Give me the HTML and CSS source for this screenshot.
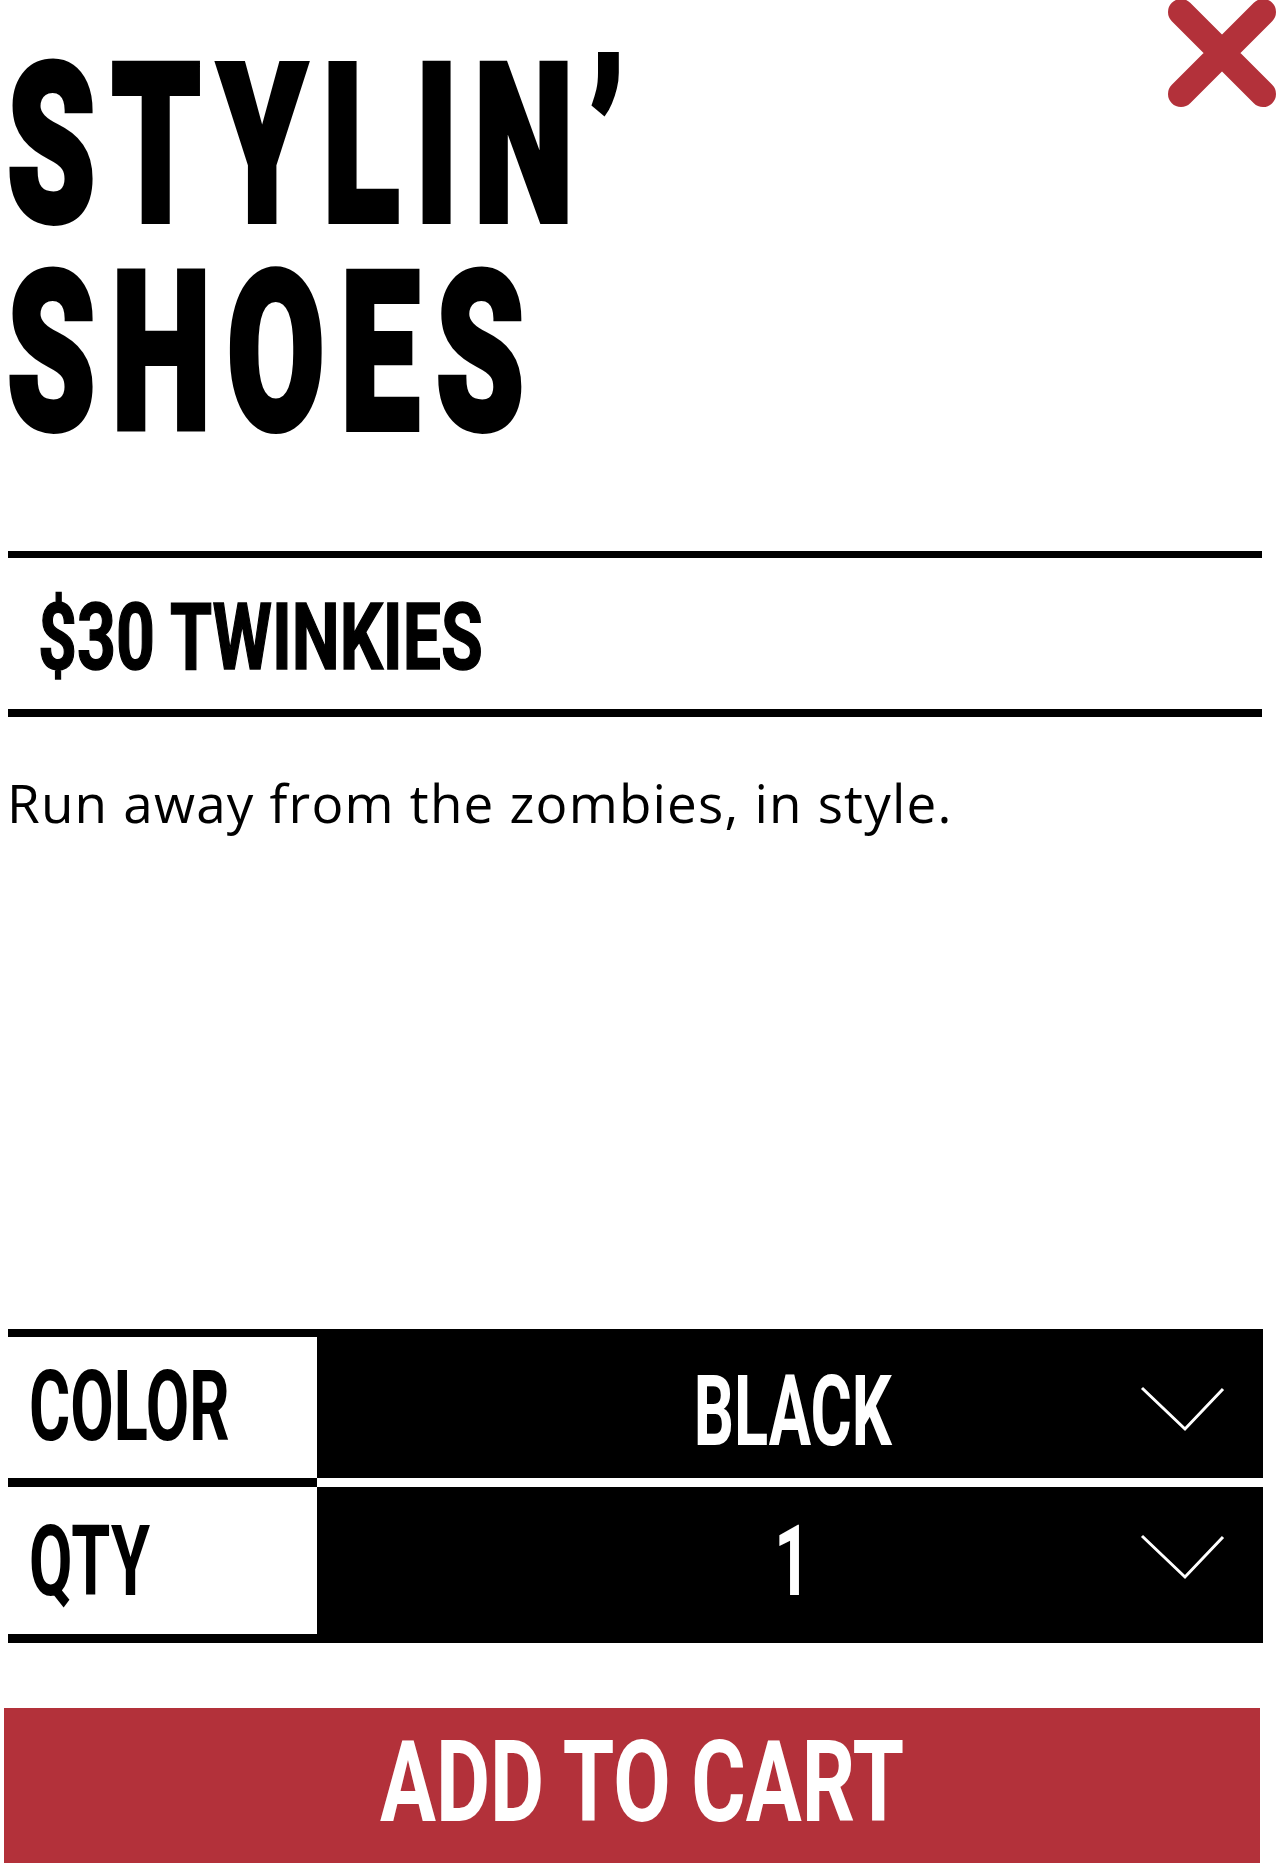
FILE: index.html
```html
<!DOCTYPE html>
<html lang="en">
<head>
<meta charset="utf-8">
<title>Stylin’ Shoes</title>
<link rel="stylesheet" href="styles.css">
</head>
<body>
<div class="product">
  <button class="close" aria-label="Close">
    <svg width="108" height="108" viewBox="0 0 108 108"><path d="M13 12 L95 94 M95 12 L13 94" stroke="#b3313a" stroke-width="26" stroke-linecap="round" fill="none"/></svg>
  </button>
  <h1 class="title"><span class="title-line">STYLIN’</span><span class="title-line title-line--2">SHOES</span></h1>
  <div class="price"><span class="price-text">$30 TWINKIES</span></div>
  <p class="desc">Run away from the zombies, in style.</p>
  <div class="options">
    <div class="opt-label opt-label--first"><span class="label-text">COLOR</span></div>
    <div class="opt-value opt-value--first"><span class="value-text">BLACK</span><svg class="chev chev--first" width="85" height="46" viewBox="0 0 85 46"><polyline points="2,2 45,43 83,3" fill="none" stroke="#fff" stroke-width="3"/></svg></div>
    <div class="opt-label opt-label--last"><span class="label-text">QTY</span></div>
    <div class="opt-value opt-value--last"><span class="value-text">1</span><svg class="chev chev--last" width="85" height="46" viewBox="0 0 85 46"><polyline points="2,2 45,43 83,3" fill="none" stroke="#fff" stroke-width="3"/></svg></div>
  </div>
  <button class="cart"><span class="cart-text">ADD TO CART</span></button>
</div>
</body>
</html>
```
FILE: styles.css
```css
html, body {
  margin: 0;
  padding: 0;
  background: #fff;
  color: #000;
}

.product {
  position: relative;
  display: flow-root;
  width: 1276px;
}

.close {
  position: absolute;
  top: 0;
  right: 0;
  width: 108px;
  height: 108px;
  padding: 0;
  border: 0;
  background: none;
  cursor: pointer;
}

.close svg {
  display: block;
}

.title {
  margin: 42px 0 0 7px;
  font-family: Roboto, "Liberation Sans", sans-serif;
  font-weight: 900;
  font-size: 221px;
  line-height: 208px;
  letter-spacing: 25px;
  -webkit-text-stroke: 6px #000;
}

.title-line {
  display: block;
  white-space: nowrap;
  transform: scaleX(0.64);
  transform-origin: 0 0;
}

.price {
  margin: 93px 0 0 8px;
  width: 1254px;
  height: 166px;
  box-sizing: border-box;
  border-top: 7px solid #000;
  border-bottom: 8px solid #000;
  padding-top: 8px;
  display: flex;
  align-items: center;
}

.price-text {
  display: inline-block;
  margin-left: 30px;
  font-family: Roboto, "Liberation Sans", sans-serif;
  font-weight: 700;
  font-size: 93px;
  line-height: 93px;
  white-space: nowrap;
  -webkit-text-stroke: 1.5px #000;
  transform: scaleX(0.73);
  transform-origin: 0 50%;
}

.desc {
  margin: 50px 0 0 7px;
  font-family: "Open Sans", "Noto Sans", sans-serif;
  font-weight: 400;
  font-size: 53px;
  line-height: 72px;
  letter-spacing: 1.2px;
}

.options {
  display: grid;
  grid-template-columns: 309px 946px;
  margin: 490px 0 0 8px;
}

.opt-label {
  background: #fff;
  display: flex;
  align-items: center;
  padding-left: 21px;
  box-sizing: border-box;
}

.opt-label--first {
  height: 158px;
  border-top: 8px solid #000;
  border-bottom: 9px solid #000;
}

.opt-label--last {
  height: 156px;
  padding-top: 4px;
  border-bottom: 9px solid #000;
}

.label-text,
.value-text {
  display: inline-block;
  font-family: Roboto, "Liberation Sans", sans-serif;
  font-weight: 700;
  font-size: 98.5px;
  line-height: 98.5px;
  white-space: nowrap;
  transform: scaleX(0.64);
}

.label-text {
  transform-origin: 0 50%;
}

.value-text {
  transform-origin: 50% 50%;
}

.opt-value {
  position: relative;
  background: #000;
  color: #fff;
  display: flex;
  align-items: center;
  justify-content: center;
  padding-left: 5px;
  box-sizing: border-box;
}

.opt-value--first {
  height: 158px;
  padding-top: 18px;
  border-bottom: 9px solid #fff;
}

.opt-value--last {
  height: 156px;
  padding-bottom: 5px;
}

.chev {
  position: absolute;
  right: 38px;
  display: block;
}

.chev--first {
  top: 57px;
}

.chev--last {
  top: 47px;
}

.cart {
  display: block;
  margin: 65px 0 0 4px;
  width: 1256px;
  height: 170px;
  box-sizing: border-box;
  border: 0;
  background: #b3313a;
  color: #fff;
  padding: 0 0 19px 21px;
  text-align: center;
  font-family: Roboto, "Liberation Sans", sans-serif;
  font-weight: 700;
  font-size: 112.5px;
  line-height: 112.5px;
  cursor: pointer;
}

.cart-text {
  display: inline-block;
  white-space: nowrap;
  transform: scaleX(0.74);
  transform-origin: 50% 50%;
}
```
